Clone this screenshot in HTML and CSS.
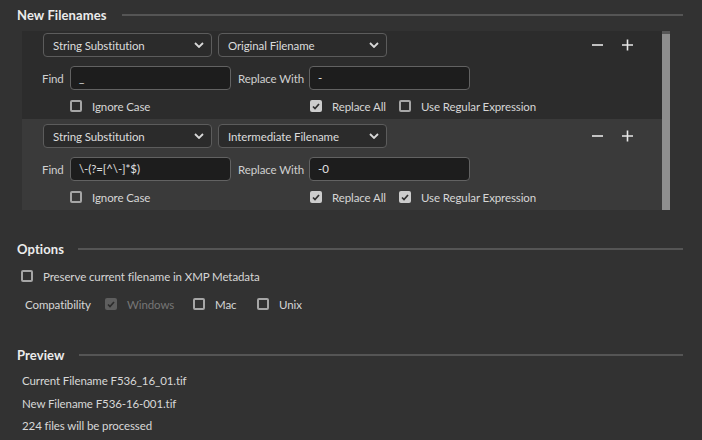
FILE: index.html
```html
<!DOCTYPE html>
<html>
<head>
<meta charset="utf-8">
<link rel="stylesheet" href="styles.css">
</head>
<body>
<div class="page">
  <div class="section-head first-head"><span class="title">New Filenames</span><span class="rule"></span></div>

  <div class="rule-list">
    <div class="rows">
      <div class="rule-row first">
        <div class="line top">
          <div class="select"><span>String Substitution</span><svg class="chev" width="10" height="6" viewBox="0 0 10 6"><path d="M1 1 L5 5 L9 1" fill="none" stroke="#d8d8d8" stroke-width="1.8"/></svg></div>
          <div class="select"><span>Original Filename</span><svg class="chev" width="10" height="6" viewBox="0 0 10 6"><path d="M1 1 L5 5 L9 1" fill="none" stroke="#d8d8d8" stroke-width="1.8"/></svg></div>
          <div class="pm">
            <svg width="12" height="12" viewBox="0 0 12 12"><path d="M0 6 H11" stroke="#e6e6e6" stroke-width="1.6"/></svg>
            <svg width="12" height="12" viewBox="0 0 12 12"><path d="M0 6 H11 M5.5 0.5 V11.5" stroke="#e6e6e6" stroke-width="1.6"/></svg>
          </div>
        </div>
        <div class="line fields">
          <span class="lbl find">Find</span>
          <div class="input">_</div>
          <span class="lbl repl">Replace With</span>
          <div class="input">-</div>
        </div>
        <div class="line checks">
          <label class="cb c1"><span class="box"></span>Ignore Case</label>
          <label class="cb c2"><span class="box on"><svg width="8" height="7" viewBox="0 0 8 7"><path d="M1 3.5 L3 5.5 L7 1" fill="none" stroke="#2f2f2f" stroke-width="1.7"/></svg></span>Replace All</label>
          <label class="cb c3"><span class="box"></span>Use Regular Expression</label>
        </div>
      </div>

      <div class="rule-row second">
        <div class="line top">
          <div class="select"><span>String Substitution</span><svg class="chev" width="10" height="6" viewBox="0 0 10 6"><path d="M1 1 L5 5 L9 1" fill="none" stroke="#d8d8d8" stroke-width="1.8"/></svg></div>
          <div class="select"><span>Intermediate Filename</span><svg class="chev" width="10" height="6" viewBox="0 0 10 6"><path d="M1 1 L5 5 L9 1" fill="none" stroke="#d8d8d8" stroke-width="1.8"/></svg></div>
          <div class="pm">
            <svg width="12" height="12" viewBox="0 0 12 12"><path d="M0 6 H11" stroke="#e6e6e6" stroke-width="1.6"/></svg>
            <svg width="12" height="12" viewBox="0 0 12 12"><path d="M0 6 H11 M5.5 0.5 V11.5" stroke="#e6e6e6" stroke-width="1.6"/></svg>
          </div>
        </div>
        <div class="line fields">
          <span class="lbl find">Find</span>
          <div class="input">\-(?=[^\-]*$)</div>
          <span class="lbl repl">Replace With</span>
          <div class="input">-0</div>
        </div>
        <div class="line checks">
          <label class="cb c1"><span class="box"></span>Ignore Case</label>
          <label class="cb c2"><span class="box on"><svg width="8" height="7" viewBox="0 0 8 7"><path d="M1 3.5 L3 5.5 L7 1" fill="none" stroke="#2f2f2f" stroke-width="1.7"/></svg></span>Replace All</label>
          <label class="cb c3"><span class="box on"><svg width="8" height="7" viewBox="0 0 8 7"><path d="M1 3.5 L3 5.5 L7 1" fill="none" stroke="#2f2f2f" stroke-width="1.7"/></svg></span>Use Regular Expression</label>
        </div>
      </div>
    </div>
    <div class="scrollbar"><div class="thumb"></div></div>
  </div>

  <div class="section-head options-head"><span class="title">Options</span><span class="rule"></span></div>
  <label class="cb preserve"><span class="box"></span>Preserve current filename in XMP Metadata</label>
  <div class="compat">
    <span class="compat-lbl">Compatibility</span>
    <label class="cb disabled"><span class="box on dis"><svg width="8" height="7" viewBox="0 0 8 7"><path d="M1 3.5 L3 5.5 L7 1" fill="none" stroke="#2c2c2c" stroke-width="1.7"/></svg></span>Windows</label>
    <label class="cb mac"><span class="box"></span>Mac</label>
    <label class="cb unix"><span class="box"></span>Unix</label>
  </div>

  <div class="section-head preview-head"><span class="title">Preview</span><span class="rule"></span></div>
  <div class="preview">
    <div>Current Filename F536_16_01.tif</div>
    <div>New Filename F536-16-001.tif</div>
    <div>224 files will be processed</div>
  </div>
</div>
</body>
</html>
```

FILE: styles.css
```css
html, body {
  margin: 0;
  padding: 0;
  background: #323232;
}
body {
  font-family: Lato, "Open Sans", "Liberation Sans", sans-serif;
  font-size: 11.5px;
  letter-spacing: -0.1px;
  color: #d6d6d6;
  width: 702px;
  height: 440px;
  overflow: hidden;
}
.page {
  padding: 7px 19px 0 17px;
}
.section-head {
  display: flex;
  align-items: center;
  height: 16px;
}
.section-head .title {
  font-weight: bold;
  font-size: 13px;
  letter-spacing: 0.1px;
  color: #ececec;
}
.section-head .rule {
  flex: 1;
  height: 2px;
  background: #555555;
  margin-left: 14px;
}
.first-head .rule {
  margin-left: 15px;
}
.rule-list {
  display: flex;
  margin: 8px 13px 0 5px;
  height: 179px;
  overflow: hidden;
}
.rows {
  flex: 1;
  overflow: hidden;
}
.rule-row {
  height: 91px;
  box-sizing: border-box;
  padding: 5px 28px 0 21px;
}
.rule-row.first {
  background: #2c2c2c;
  margin-top: -3px;
}
.rule-row.second {
  background: #3a3a3a;
}
.line {
  display: flex;
  align-items: center;
}
.select {
  width: 169px;
  height: 24px;
  box-sizing: border-box;
  border: 1px solid #5c5c5c;
  border-radius: 4px;
  background: #2b2b2b;
  display: flex;
  align-items: center;
  justify-content: space-between;
  padding: 0 7px 0 9px;
  margin-right: 6px;
  color: #dcdcdc;
}
.pm {
  margin-left: auto;
  display: flex;
  gap: 18px;
  align-items: center;
}
.fields {
  margin-top: 9px;
}
.lbl {
  color: #d0d0d0;
}
.lbl.find {
  width: 28px;
  margin-left: -1px;
}
.lbl.repl {
  margin-left: 7px;
  width: 71px;
}
.input {
  width: 161px;
  height: 24px;
  box-sizing: border-box;
  border: 1px solid #626262;
  border-radius: 4px;
  background: #1d1d1d;
  color: #e2e2e2;
  padding: 0 8px;
  line-height: 22px;
}
.checks {
  margin-top: 6px;
  height: 20px;
}
.cb {
  display: flex;
  align-items: center;
  gap: 10px;
  height: 20px;
  color: #d6d6d6;
  flex: none;
}
.box {
  width: 12px;
  height: 12px;
  box-sizing: border-box;
  border: 2px solid #a6a6a6;
  border-radius: 2px;
  display: flex;
  align-items: center;
  justify-content: center;
  flex: none;
}
.box.on {
  border: none;
  background: #cdcdcd;
}
.box.on.dis {
  background: #5e5e5e;
}
.c1 {
  margin-left: 27px;
  width: 240px;
}
.c2 {
  width: 89px;
}
.scrollbar {
  width: 8px;
  background: #575757;
  display: flex;
  flex-direction: column;
}
.thumb {
  margin-top: 3px;
  flex: 1;
  background: #8e8e8e;
}
.options-head {
  margin-top: 31px;
}
.preserve {
  margin: 9px 0 0 4px;
}
.compat {
  display: flex;
  align-items: center;
  height: 20px;
  margin: 8px 0 0 8px;
}
.compat-lbl {
  width: 80px;
}
.cb.disabled {
  color: #767676;
  width: 88px;
}
.mac {
  width: 64px;
}
.preview-head {
  margin-top: 33px;
}
.preview {
  margin: 7px 0 0 5px;
  line-height: 22.5px;
  color: #d8d8d8;
}
```
